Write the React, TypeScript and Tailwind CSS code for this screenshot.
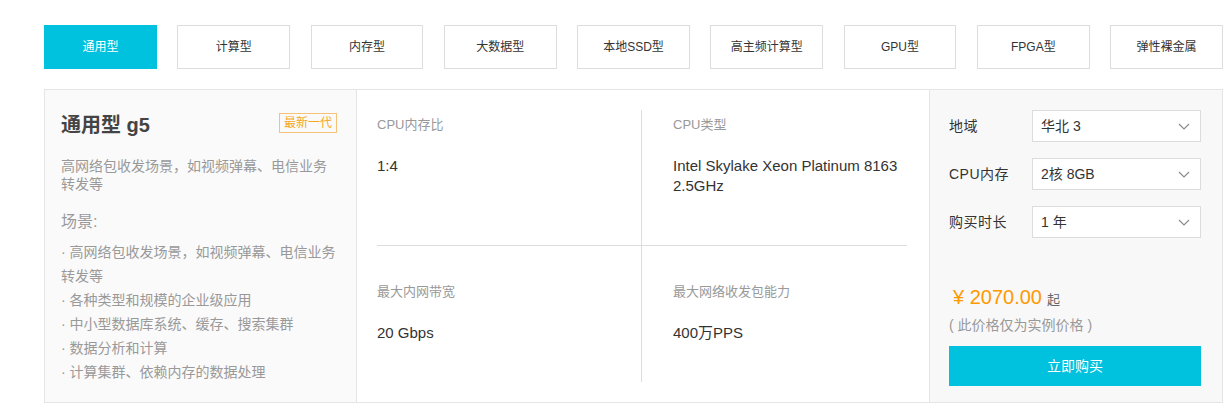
import React, { useState } from 'react';

const TABS = ['通用型', '计算型', '内存型', '大数据型', '本地SSD型', '高主频计算型', 'GPU型', 'FPGA型', '弹性裸金属'];

const SCENES = [
  '高网络包收发场景，如视频弹幕、电信业务转发等',
  '各种类型和规模的企业级应用',
  '中小型数据库系统、缓存、搜索集群',
  '数据分析和计算',
  '计算集群、依赖内存的数据处理',
];

const FONT = { fontFamily: '"Liberation Sans", "Noto Sans CJK SC", sans-serif' };

const Chevron = () => (
  <svg width="12" height="7" viewBox="0 0 12 7" fill="none">
    <polyline points="1,1 6,6 11,1" stroke="#888" strokeWidth="1.1" />
  </svg>
);

const SelectRow: React.FC<{ label: string; value: string }> = ({ label, value }) => (
  <div className="flex items-center">
    <span className="w-[83px] text-[14px] text-[#333] tracking-[0.5px]">{label}</span>
    <div className="flex items-center justify-between w-[169px] h-[32px] border border-[#dcdcdc] bg-white pl-[8px] pr-[10px]">
      <span className="text-[14px] text-[#333]">{value}</span>
      <Chevron />
    </div>
  </div>
);

const Spec: React.FC<{ label: string; value: React.ReactNode; top: string; className?: string }> = ({ label, value, top, className }) => (
  <div className={className}>
    <div className={`${top} text-[13px] leading-[20px] text-[#999]`}>{label}</div>
    <div className="mt-[21px] text-[15px] leading-[20px] text-[#333]">{value}</div>
  </div>
);

export default function App() {
  const [active, setActive] = useState(0);

  return (
    <div className="w-[1231px] h-[409px] bg-white pt-[25px] pl-[44px] pr-[8px]" style={FONT}>
      {/* Tabs */}
      <div className="grid grid-cols-9 gap-x-[20.5px]">
        {TABS.map((t, i) => (
          <button
            key={t}
            onClick={() => setActive(i)}
            className={`h-[44px] text-[12px] ${i === active ? 'bg-[#00c1de] text-white border border-[#00c1de]' : 'bg-white text-[#333] border border-[#ddd]'}`}
          >
            {t}
          </button>
        ))}
      </div>

      {/* Panel */}
      <div className="mt-[20px] flex h-[314px] border border-[#e5e5e5]">
        {/* Left: description */}
        <div className="w-[312px] bg-[#fafafa] border-r border-[#e5e5e5] pl-[16px] pr-[19px] pt-[21px]">
          <div className="flex items-start justify-between">
            <h2 className="text-[20px] leading-[28px] font-bold text-[#444]">通用型 g5</h2>
            <span className="mt-[2px] h-[20px] px-[4px] border border-[#f5c27a] text-[12px] leading-[18px] text-[#f5a623]">最新一代</span>
          </div>
          <p className="mt-[18px] text-[14px] leading-[18px] text-[#999]">高网络包收发场景，如视频弹幕、电信业务转发等</p>
          <div className="mt-[17px] text-[16px] leading-[24px] text-[#999]">场景:</div>
          <ul className="mt-[6px] text-[14px] leading-[24px] text-[#999]">
            {SCENES.map((s) => (
              <li key={s}>{'· ' + s}</li>
            ))}
          </ul>
        </div>

        {/* Middle: specs */}
        <div className="w-[573px] bg-white border-r border-[#e5e5e5] px-[20px] pt-[20px]">
          <div className="grid grid-cols-2 w-[530px]">
            <Spec className="h-[136px] border-r border-b border-[#ddd]" top="pt-[5px]" label="CPU内存比" value="1:4" />
            <Spec
              className="h-[136px] border-b border-[#ddd] pl-[31px]"
              top="pt-[5px]"
              label="CPU类型"
              value={<>Intel Skylake Xeon Platinum 8163<br />2.5GHz</>}
            />
            <Spec className="h-[136px] border-r border-[#ddd]" top="pt-[36px]" label="最大内网带宽" value="20 Gbps" />
            <Spec className="h-[136px] pl-[31px]" top="pt-[36px]" label="最大网络收发包能力" value="400万PPS" />
          </div>
        </div>

        {/* Right: purchase */}
        <div className="flex-1 bg-[#f8f8f8] pl-[19px] pr-[21px] pt-[20px] pb-[16px] flex flex-col">
          <div className="flex flex-col gap-[16px]">
            <SelectRow label="地域" value="华北 3" />
            <SelectRow label="CPU内存" value="2核 8GB" />
            <SelectRow label="购买时长" value="1 年" />
          </div>
          <div className="mt-auto">
            <div className="flex items-baseline pl-[4px] text-[#f90]">
              <span className="text-[20px] leading-[26px]">¥ 2070.00</span>
              <span className="ml-[5px] text-[13px] text-[#666]">起</span>
            </div>
            <div className="mt-[5px] text-[14px] leading-[20px] text-[#999]">( 此价格仅为实例价格 )</div>
            <button className="mt-[11px] w-full h-[40px] bg-[#00c1de] text-white text-[14px]">立即购买</button>
          </div>
        </div>
      </div>
    </div>
  );
}
